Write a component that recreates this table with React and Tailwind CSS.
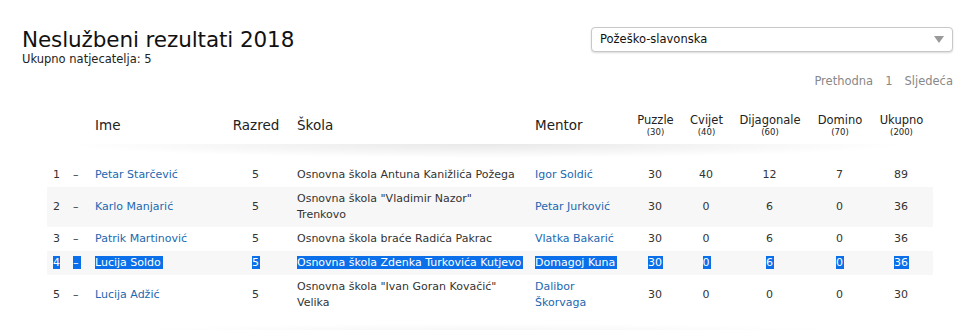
import React from 'react';

const rows = [
    { n: 1, name: 'Petar Starčević', razred: 5, skola: ['Osnovna škola Antuna Kanižlića Požega'], mentor: ['Igor Soldić'], s: [30, 40, 12, 7, 89] },
    { n: 2, name: 'Karlo Manjarić', razred: 5, skola: ['Osnovna škola "Vladimir Nazor"', 'Trenkovo'], mentor: ['Petar Jurković'], s: [30, 0, 6, 0, 36] },
    { n: 3, name: 'Patrik Martinović', razred: 5, skola: ['Osnovna škola braće Radića Pakrac'], mentor: ['Vlatka Bakarić'], s: [30, 0, 6, 0, 36] },
    { n: 4, name: 'Lucija Soldo', razred: 5, skola: ['Osnovna škola Zdenka Turkovića Kutjevo'], mentor: ['Domagoj Kuna'], s: [30, 0, 6, 0, 36], selected: true },
    { n: 5, name: 'Lucija Adžić', razred: 5, skola: ['Osnovna škola "Ivan Goran Kovačić"', 'Velika'], mentor: ['Dalibor', 'Škorvaga'], s: [30, 0, 0, 0, 30] },
];

const tasks = [
    ['Puzzle', 30],
    ['Cvijet', 40],
    ['Dijagonale', 60],
    ['Domino', 70],
    ['Ukupno', 200],
];

const cols = 'grid grid-cols-[19px_22px_134px_68px_238px_100px_55px_47px_80px_60px_63px]';

const Sel = ({ on, children, className = '' }) =>
    on ? <span className={`bg-[#0a6fe8] text-white ${className}`}>{children}</span> : <span className={className}>{children}</span>;

const App = () => {
    return (
        <div className="w-[977px] h-[330px] bg-white overflow-hidden text-[#333] font-['DejaVu_Sans',sans-serif]">
            <div className="flex justify-between pl-[22px] pr-[24px] pt-[27px]">
                <div>
                    <h1 className="text-[21.5px] leading-[26px] text-[#111] tracking-[-0.1px]">Neslužbeni rezultati 2018</h1>
                    <p className="text-[11.5px] leading-[13px] text-[#222]">Ukupno natjecatelja: 5</p>
                </div>
                <div className="flex flex-col items-end">
                    <div className="w-[362px] h-[25px] border border-[#c8c8c8] rounded-[4px] bg-white shadow-[0_1px_2px_rgba(0,0,0,0.15)] flex items-center justify-between pl-[8px] pr-[8px]">
                        <span className="text-[11.5px] text-[#111]">Požeško-slavonska</span>
                        <svg width="10" height="7" viewBox="0 0 10 7"><path d="M0 0h10L5 7z" fill="#999" /></svg>
                    </div>
                    <div className="mt-[21px] flex gap-[12px] text-[11.5px] text-[#888]">
                        <span>Prethodna</span>
                        <span>1</span>
                        <span>Sljedeća</span>
                    </div>
                </div>
            </div>

            <div className="ml-[47px] w-[886px] mt-[16px]">
                <div className={`${cols} h-[38px] items-center`}>
                    <div />
                    <div />
                    <div className="pl-[7px] text-[13.5px] text-[#222]">Ime</div>
                    <div className="text-center text-[13.5px] text-[#222]">Razred</div>
                    <div className="pl-[7px] text-[13.5px] text-[#222]">Škola</div>
                    <div className="pl-[7px] text-[13.5px] text-[#222]">Mentor</div>
                    {tasks.map(([t, max]) => (
                        <div key={t} className="flex flex-col items-center text-[#222]">
                            <span className="text-[11.5px] leading-[14px]">{t}</span>
                            <span className="text-[8.5px] leading-[11px]">({max})</span>
                        </div>
                    ))}
                </div>
                <div className="ml-[13px] mr-[18px] h-[14px] bg-[radial-gradient(ellipse_at_top,rgba(0,0,0,0.09),transparent_70%)]" />

                <div className="mt-[5px] text-[11px] leading-[16px]">
                    {rows.map((r, i) => (
                        <div key={r.n} className={`${cols} items-center py-[4px] ${i % 2 === 1 ? 'bg-[#f7f7f7]' : ''}`}>
                            <div className="pl-[6px]"><Sel on={r.selected}>{r.n}</Sel></div>
                            <div className="pl-[7px]"><Sel on={r.selected} className="pr-[2px]">–</Sel></div>
                            <div className="pl-[7px] text-[#2268b0]"><Sel on={r.selected} className="pr-[2px]">{r.name}</Sel></div>
                            <div className="text-center"><Sel on={r.selected} className="pr-[1px]">{r.razred}</Sel></div>
                            <div className="pl-[7px]">
                                {r.skola.map((l) => (
                                    <div key={l}><Sel on={r.selected} className="pr-[2px]">{l}</Sel></div>
                                ))}
                            </div>
                            <div className="pl-[7px] text-[#2268b0]">
                                {r.mentor.map((l) => (
                                    <div key={l}><Sel on={r.selected} className="pr-[2px]">{l}</Sel></div>
                                ))}
                            </div>
                            {r.s.map((v, j) => (
                                <div key={j} className="text-center text-[#333]"><Sel on={r.selected} className="pr-[1px]">{v}</Sel></div>
                            ))}
                        </div>
                    ))}
                </div>
                <div className="mt-[8px] ml-[18px] mr-[28px] h-[14px] bg-[radial-gradient(ellipse_at_bottom,rgba(0,0,0,0.06),transparent_70%)]" />
            </div>
        </div>
    );
};

export default App;
